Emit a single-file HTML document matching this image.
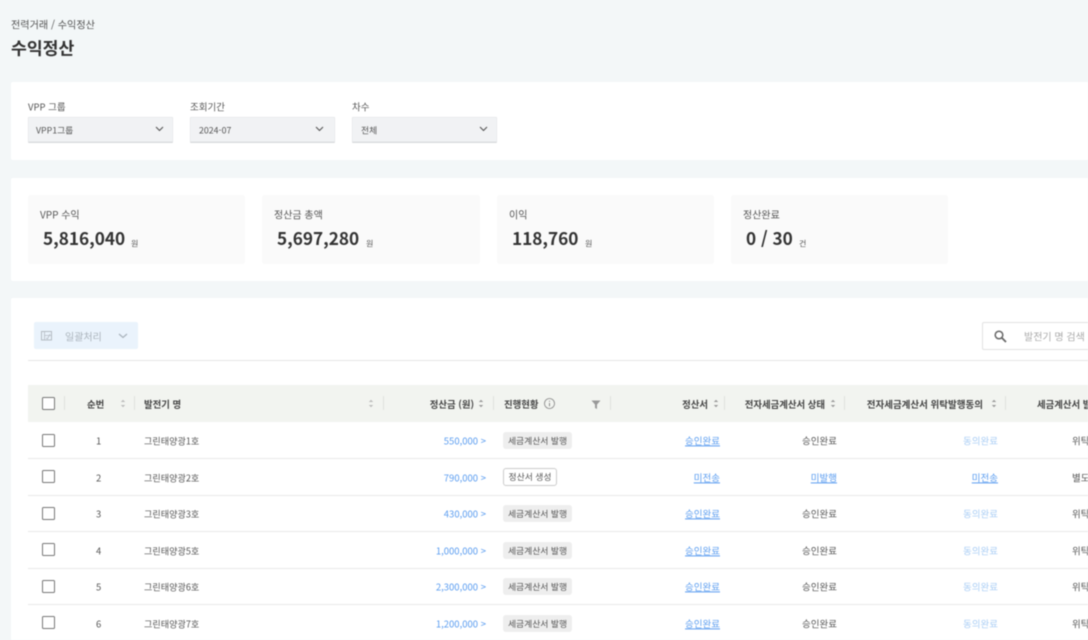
<!DOCTYPE html>
<html lang="ko"><head><meta charset="utf-8"><title>수익정산</title>
<style>
html,body{margin:0;padding:0;width:1088px;height:640px;overflow:hidden;background:#f3f7f8}
body{font-family:"Liberation Sans","Noto Sans CJK KR",sans-serif;font-size:9.5px;color:#555;position:relative}
#w{position:absolute;left:0;top:0;width:1088px;height:640px;overflow:hidden;filter:blur(.4px)}
.a{position:absolute;white-space:nowrap;line-height:12px;transform:translateY(.4px)}
.k{font-family:"Noto Sans CJK KR","Liberation Sans",sans-serif}
.p{position:absolute;left:11px;width:1090px;background:#fff;border-radius:2px}
.s{position:absolute;top:117px;width:144px;height:25px;background:#f1f2f4;border-bottom:1px solid #d8dadc;box-shadow:inset 0 0 0 .5px #dfe1e3;border-radius:1px}
.c{position:absolute;top:195px;height:69px;background:#fafafa;border-radius:3px}
.n{position:absolute;top:226px;font-family:"Noto Sans CJK KR",sans-serif;font-weight:700;font-size:17.2px;line-height:24px;color:#333;white-space:nowrap}
.cb{position:absolute;left:42px;width:10.500px;height:10.500px;border:1.600px solid #777;border-radius:1.500px;background:#fff}
.l{position:absolute;left:28px;width:1060px;height:1px;background:#e8e8e8}
.h{font-weight:700;color:#444;font-family:"Noto Sans CJK KR",sans-serif;font-size:9.400px;transform:none}
.v{position:absolute;top:396px;width:1px;height:14px;background:#dfe2dd}
.r{text-align:right}
.nm{font-size:9.100px}
.lg{font-size:10px}
.b{color:#5b9df0}.u{color:#5b9df0;text-decoration:underline}.lb{color:#a9cdf5}
.t{position:absolute;left:503px;width:69px;height:17px;line-height:17.500px;background:#eeeeee;border-radius:3px;text-align:center;color:#555;font-size:8.800px;white-space:nowrap}
.t2{background:#fff;border:.7px solid #ccc;width:52px;height:16px;line-height:16.500px}
svg{position:absolute;overflow:visible}
</style></head><body><div id="w" class="k">
<div class="a" style="left:11px;top:18px;font-size:10.100px;color:#555">전력거래 / 수익정산</div>
<div class="a" style="left:11px;top:37px;font-size:17.200px;line-height:20px;font-weight:700;color:#333">수익정산</div>

<div class="p" style="top:82px;height:78px"></div>
<div class="a" style="left:28px;top:100px">VPP 그룹</div>
<div class="a" style="left:190px;top:100px">조회기간</div>
<div class="a" style="left:352px;top:100px">차수</div>
<div class="s" style="left:28px;width:145px"></div><div class="s" style="left:190px;width:145px"></div><div class="s" style="left:352px;width:145px"></div>
<div class="a" style="left:36px;top:124px;font-size:8.800px">VPP1그룹</div>
<div class="a" style="left:199px;top:124px;font-size:8.800px">2024-07</div>
<div class="a" style="left:361px;top:124px;font-size:8.800px">전체</div>
<svg style="left:155px;top:126px" width="9" height="6"><path d="M1 1l3.500 3.500L8 1" fill="none" stroke="#555" stroke-width="1.100"/></svg>
<svg style="left:315px;top:126px" width="9" height="6"><path d="M1 1l3.500 3.500L8 1" fill="none" stroke="#555" stroke-width="1.100"/></svg>
<svg style="left:479px;top:126px" width="9" height="6"><path d="M1 1l3.500 3.500L8 1" fill="none" stroke="#555" stroke-width="1.100"/></svg>

<div class="p" style="top:178px;height:103px"></div>
<div class="c" style="left:28px;width:217px"></div><div class="c" style="left:262px;width:218px"></div><div class="c" style="left:497px;width:217px"></div><div class="c" style="left:731px;width:217px"></div>
<div class="a lg" style="left:40px;top:208px">VPP 수익</div>
<div class="a lg" style="left:274px;top:208px">정산금 총액</div>
<div class="a lg" style="left:509px;top:208px">이익</div>
<div class="a lg" style="left:743px;top:208px">정산완료</div>
<div class="n" style="left:43px">5,816,040</div><div class="a" style="left:131px;top:238px;font-size:8px">원</div>
<div class="n" style="left:277px">5,697,280</div><div class="a" style="left:366px;top:238px;font-size:8px">원</div>
<div class="n" style="left:512px">118,760</div><div class="a" style="left:585px;top:238px;font-size:8px">원</div>
<div class="n" style="left:746px">0 / 30</div><div class="a" style="left:799px;top:238px;font-size:8px">건</div>

<div class="p" style="top:298px;height:350px"></div>
<div style="position:absolute;left:34px;top:322px;width:104px;height:27px;background:#eaf3fc;border-radius:2px"></div>
<svg style="left:41px;top:331px" width="12" height="10"><rect x=".5" y=".5" width="10" height="8.500" fill="none" stroke="#b5bcc3"/><path d="M3.500.5v8.500M3.500 4.500h7M5 7l1.500 .8L9 3" fill="none" stroke="#b5bcc3" stroke-width=".8"/></svg>
<div class="a lg" style="left:65px;top:330px;color:#aab3bb">일괄처리</div>
<svg style="left:118px;top:333px" width="10" height="6"><path d="M1 1l4 3.500L9 1" fill="none" stroke="#a8b2bb" stroke-width="1.200"/></svg>
<div style="position:absolute;left:982px;top:322px;width:120px;height:26px;background:#fff;border:1px solid #e2e2e2;border-radius:2px"></div>
<svg style="left:994px;top:330px" width="13" height="13"><circle cx="5" cy="5" r="3.800" fill="none" stroke="#666" stroke-width="1.500"/><path d="M8 8l4 4" stroke="#666" stroke-width="1.800"/></svg>
<div class="a lg" style="left:1024px;top:330px;color:#aaa">발전기 명 검색</div>
<div class="l" style="top:360px;background:#e6e6e6"></div>

<div style="position:absolute;left:28px;top:385px;width:1060px;height:37px;background:#f2f4f0"></div>
<div class="cb" style="top:397px"></div>
<div class="v" style="left:64px"></div><div class="v" style="left:134px"></div><div class="v" style="left:383px"></div><div class="v" style="left:493px"></div><div class="v" style="left:610px"></div><div class="v" style="left:724px"></div><div class="v" style="left:844px"></div><div class="v" style="left:1005px"></div>
<div class="a h" style="left:87px;top:398px">순번</div>
<div class="a h" style="left:144px;top:398px">발전기 명</div>
<div class="a h r" style="right:614px;top:398px">정산금 (원)</div>
<div class="a h" style="left:504px;top:398px">진행현황</div>
<div class="a h r" style="right:380px;top:398px">정산서</div>
<div class="a h r" style="right:263px;top:398px">전자세금계산서 상태</div>
<div class="a h r" style="right:105px;top:398px;font-size:9.500px">전자세금계산서 위탁발행동의</div>
<div class="a h" style="left:1037px;top:398px">세금계산서 발행</div>
<svg style="left:120px;top:399px" width="6" height="9"><path d="M.8 3L3 .8 5.200 3zM.8 6L3 8.200 5.200 6z" fill="#bbb"/></svg>
<svg style="left:368px;top:399px" width="6" height="9"><path d="M.8 3L3 .8 5.200 3zM.8 6L3 8.200 5.200 6z" fill="#bbb"/></svg>
<svg style="left:478px;top:399px" width="6" height="9"><path d="M.8 3L3 .8 5.200 3zM.8 6L3 8.200 5.200 6z" fill="#999"/></svg>
<svg style="left:713px;top:399px" width="6" height="9"><path d="M.8 3L3 .8 5.200 3zM.8 6L3 8.200 5.200 6z" fill="#999"/></svg>
<svg style="left:830px;top:399px" width="6" height="9"><path d="M.8 3L3 .8 5.200 3zM.8 6L3 8.200 5.200 6z" fill="#999"/></svg>
<svg style="left:991px;top:399px" width="6" height="9"><path d="M.8 3L3 .8 5.200 3zM.8 6L3 8.200 5.200 6z" fill="#999"/></svg>
<svg style="left:544px;top:398px" width="12" height="12"><circle cx="5.500" cy="5.500" r="5" fill="none" stroke="#888" stroke-width=".8"/><path d="M5.500 5v3.200M5.500 2.800v1" stroke="#888"/></svg>
<svg style="left:591px;top:400px" width="10" height="9"><path d="M.5.500h9L6 4.500V9L4 8V4.500z" fill="#999"/></svg>

<!-- rows -->
<div class="l" style="top:458px"></div><div class="l" style="top:495px"></div><div class="l" style="top:531px"></div><div class="l" style="top:568px"></div><div class="l" style="top:604px"></div>

<div class="cb" style="top:434px"></div><div class="cb" style="top:470px"></div><div class="cb" style="top:507px"></div><div class="cb" style="top:543px"></div><div class="cb" style="top:580px"></div><div class="cb" style="top:616px"></div>

<div class="a" style="left:96px;top:434px">1</div><div class="a" style="left:96px;top:471px">2</div><div class="a" style="left:96px;top:507px">3</div><div class="a" style="left:96px;top:544px">4</div><div class="a" style="left:96px;top:580px">5</div><div class="a" style="left:96px;top:617px">6</div>

<div class="a nm" style="left:144px;top:434px">그린태양광1호</div><div class="a nm" style="left:144px;top:471px">그린태양광2호</div><div class="a nm" style="left:144px;top:507px">그린태양광3호</div><div class="a nm" style="left:144px;top:544px">그린태양광5호</div><div class="a nm" style="left:144px;top:580px">그린태양광6호</div><div class="a nm" style="left:144px;top:617px">그린태양광7호</div>

<div class="a r b" style="right:602px;top:434px">550,000 &gt;</div><div class="a r b" style="right:602px;top:471px">790,000 &gt;</div><div class="a r b" style="right:602px;top:507px">430,000 &gt;</div><div class="a r b" style="right:602px;top:544px">1,000,000 &gt;</div><div class="a r b" style="right:602px;top:580px">2,300,000 &gt;</div><div class="a r b" style="right:602px;top:617px">1,200,000 &gt;</div>

<div class="t" style="top:432px">세금계산서 발행</div><div class="t t2" style="top:468px">정산서 생성</div><div class="t" style="top:505px">세금계산서 발행</div><div class="t" style="top:542px">세금계산서 발행</div><div class="t" style="top:578px">세금계산서 발행</div><div class="t" style="top:615px">세금계산서 발행</div>

<div class="a r u" style="right:368px;top:434px">승인완료</div><div class="a r u" style="right:368px;top:471px">미전송</div><div class="a r u" style="right:368px;top:507px">승인완료</div><div class="a r u" style="right:368px;top:544px">승인완료</div><div class="a r u" style="right:368px;top:580px">승인완료</div><div class="a r u" style="right:368px;top:617px">승인완료</div>

<div class="a r" style="right:251px;top:434px">승인완료</div><div class="a r u" style="right:251px;top:471px">미발행</div><div class="a r" style="right:251px;top:507px">승인완료</div><div class="a r" style="right:251px;top:544px">승인완료</div><div class="a r" style="right:251px;top:580px">승인완료</div><div class="a r" style="right:251px;top:617px">승인완료</div>

<div class="a r lb" style="right:90px;top:434px">동의완료</div><div class="a r u" style="right:90px;top:471px">미전송</div><div class="a r lb" style="right:90px;top:507px">동의완료</div><div class="a r lb" style="right:90px;top:544px">동의완료</div><div class="a r lb" style="right:90px;top:580px">동의완료</div><div class="a r lb" style="right:90px;top:617px">동의완료</div>

<div class="a" style="left:1072px;top:434px">위탁발행</div><div class="a" style="left:1072px;top:471px">별도발행</div><div class="a" style="left:1072px;top:507px">위탁발행</div><div class="a" style="left:1072px;top:544px">위탁발행</div><div class="a" style="left:1072px;top:580px">위탁발행</div><div class="a" style="left:1072px;top:617px">위탁발행</div>
</div></body></html>
